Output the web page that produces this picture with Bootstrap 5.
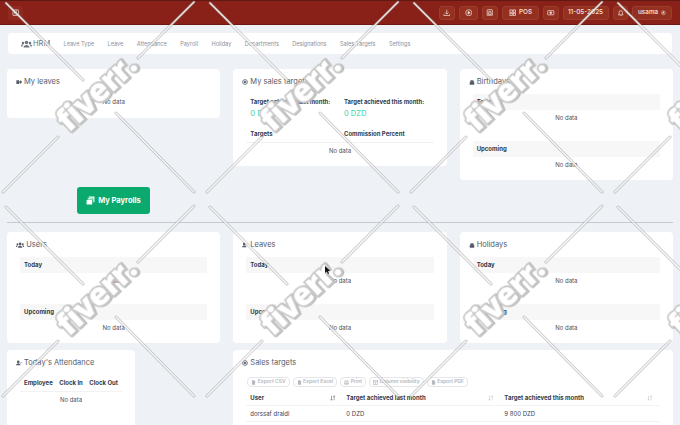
<!DOCTYPE html>
<html lang="en">
<head>
<meta charset="utf-8">
<title>HRM</title>
<link href="https://cdn.jsdelivr.net/npm/bootstrap@5.3.0/dist/css/bootstrap.min.css" rel="stylesheet">
<style>
html,body{height:425px;overflow:hidden}
body{background:#eef1f6;font-family:Inter,"Liberation Sans",sans-serif;font-size:6px;color:#3d4452;position:relative}
.topbar{height:25px;background:#8a2118;border-bottom:1px solid #6e1810;border-top:1px solid #5f1a14;padding:0 8px}
.tbtn{height:14px;padding:0 3px;background:#93301f;border:1px solid #9c3d2f;border-radius:3px;color:#f0dcd8;font-size:6.3px;font-weight:600;display:flex;align-items:center;justify-content:center;gap:3px}
.tbtn svg{width:7.5px;height:7.5px;display:block}
.tw2{padding:0 5px}.twpos{padding:0 6px}.twdate{padding:0 4px;width:46px}.twuser{padding:0 5px;width:40px}
.menuicon{background:#8f2a20;padding:0;width:15px;border:0;margin-left:0}
.actions{gap:4px}
.navcard{margin:8px 8px 15px;height:21px;background:#fff;border-radius:4px;padding:1px 13px 0;gap:13.4px;color:#8b919c;font-size:5.6px}
.navcard .hrm{font-size:7.5px;color:#6c7380;display:flex;align-items:center;gap:1px}
.page{padding:0 7px}
.page>.row{--bs-gutter-x:13px;--bs-gutter-y:0}
.pane{background:#fff;border-radius:4px;padding:8px 13px 0 13px;font-size:6px;overflow:hidden}
.pane h6{font-size:7.5px;font-weight:400;color:#555c69;margin:0;line-height:10px;display:flex;align-items:center;gap:2px;margin-left:-4px}
.pane h6 svg{height:6px;width:auto;flex:none}
.pane-leaves{height:49px}
.pane-sales{height:97px}
.pane-birth{height:111px}
.pane-two{height:111px}
.pane-att{width:128px;height:90px}
.pane-tgt{height:90px}
.nodata{text-align:center;color:#4a505c;line-height:16px}
.nodata-top{margin-top:7px}
.strip{background:#f7f7f8;height:16px;line-height:16px;padding:0 4px;font-weight:700;color:#333a47}
.strip-first{margin-top:7px}
.strip-up{margin-top:15px}
.gridtwo{display:grid;grid-template-columns:1fr 1fr}
.gridtwo>div{padding:0 4px}
.achrow{margin-top:10px}
.ach{color:#333a47;font-weight:700;line-height:9px;white-space:nowrap;font-size:5.900px}
.zero{color:#41d3a5;font-size:7.5px;line-height:12px;margin-top:2px}
.th{font-weight:700;color:#333a47;border-bottom:1px solid #f1f2f4;height:16px;line-height:14px}
.thgap{margin-top:7px}
.paybtn{width:73px;height:27px;background:#0aa96d;border-radius:3px;color:#fff;font-size:7.5px;font-weight:700;gap:3px}
.payrow{margin-top:69px;padding-left:70px}
.divline{border:0;border-top:1px solid #c6cad0;opacity:1;margin:8px 0 9px}
.expbar{margin:9px 0 3px 1px;gap:3px}
.exp{height:10px;border:1px solid #e4e6ea;border-radius:4px;padding:0 3px;color:#b4b8c0;font-size:5px;font-weight:600;display:flex;align-items:center;gap:1.500px;white-space:nowrap}
.exp svg{width:5px;height:5px}
.tgrid{display:grid;grid-template-columns:96px 158px 159px}
.tcell{padding:0 4px;display:flex;justify-content:space-between;align-items:center}
.tcell svg{width:6px;height:6px;margin-right:2px}
.tdata{padding:0 4px;line-height:15px;border-bottom:1px solid #f1f2f4}
.attrow{margin-top:8px;padding:0 4px;gap:0}
.atthead{display:flex;justify-content:space-between}
.rowlast{margin-top:7px}
.wm{position:absolute;left:0;top:0;width:680px;height:425px;pointer-events:none}
.wmtext{font-family:"Open Sans","Liberation Sans",sans-serif;font-weight:800;font-size:31px;letter-spacing:-.5px;fill:#fff;stroke:#c9c9c9;stroke-width:3.5px;paint-order:stroke;filter:drop-shadow(1px 1.500px 0 #b4b4b4)}
</style>
</head>
<body>
<header class="topbar d-flex align-items-center justify-content-between">
  <div class="tbtn menuicon"><svg viewBox="0 0 16 16" fill="none" stroke="#f3dcd8" stroke-width="1.6"><rect x="2" y="2" width="12" height="12" rx="1"/><path d="M9 2v12M4.500 6h2M4.500 8h2M4.500 10h2"/></svg></div>
  <div class="d-flex align-items-center actions">
    <div class="tbtn"><svg viewBox="0 0 16 16" fill="none" stroke="currentColor" stroke-width="1.6"><path d="M8 1.500v9M4.500 7.500 8 11l3.500-3.500M2 11v3h12v-3"/></svg></div>
    <div class="tbtn tw2"><svg viewBox="0 0 16 16" fill="none" stroke="currentColor" stroke-width="1.6"><circle cx="8" cy="8" r="6.500"/><path d="M6.500 5 11 8l-4.500 3z" fill="currentColor"/></svg></div>
    <div class="tbtn"><svg viewBox="0 0 16 16" fill="none" stroke="currentColor" stroke-width="1.6"><rect x="2.500" y="1.500" width="11" height="13" rx="1"/><path d="M5 5h6M5 8h6v4H5z"/></svg></div>
    <div class="tbtn twpos"><svg viewBox="0 0 16 16" fill="none" stroke="currentColor" stroke-width="1.6"><rect x="2" y="2" width="5" height="5"/><rect x="9" y="2" width="5" height="5"/><rect x="2" y="9" width="5" height="5"/><rect x="9" y="9" width="5" height="5"/></svg>POS</div>
    <div class="tbtn"><svg viewBox="0 0 16 16" fill="none" stroke="currentColor" stroke-width="1.6"><rect x="1.500" y="3.500" width="13" height="9" rx="1"/><circle cx="8" cy="8" r="2" fill="currentColor"/></svg></div>
    <div class="tbtn twdate">11-05-2025</div>
    <div class="tbtn"><svg viewBox="0 0 16 16" fill="none" stroke="currentColor" stroke-width="1.6"><path d="M3 12.500h10l-1.500-2V7a3.500 3.500 0 0 0-7 0v3.500zM6.500 14.500h3"/></svg></div>
    <div class="tbtn twuser">usama<svg viewBox="0 0 16 16" fill="none" stroke="currentColor" stroke-width="1.600"><circle cx="8" cy="8" r="6.500"/><circle cx="8" cy="6.500" r="2.200" fill="currentColor"/><path d="M4 12.500c1-2.500 7-2.500 8 0"/></svg></div>
  </div>
</header>
<nav class="navcard d-flex align-items-center">
  <span class="hrm"><svg width="11" height="8" viewBox="0 0 22 16" fill="#6c7380"><circle cx="11" cy="5" r="3.500"/><circle cx="4" cy="6" r="2.500"/><circle cx="18" cy="6" r="2.500"/><path d="M5 15c0-7 12-7 12 0zM0 13c0-4 3-5 5-4-1 1-2 2-2 4zM22 13c0-4-3-5-5-4 1 1 2 2 2 4z"/></svg>HRM</span>
  <span>Leave Type</span><span>Leave</span><span>Attendance</span><span>Payroll</span><span>Holiday</span><span>Departments</span><span>Designations</span><span>Sales Targets</span><span>Settings</span>
</nav>
<main class="page">
  <div class="row">
    <div class="col-4">
      <section class="pane pane-leaves">
        <h6><svg viewBox="0 0 16 16" fill="#555c69"><path d="M1 3h7v10H1zM9 5h3V2l4 6-4 6v-3H9z"/></svg>My leaves</h6>
        <div class="nodata nodata-top">No data</div>
      </section>
      <div class="payrow"><div class="paybtn d-flex align-items-center justify-content-center"><svg width="9" height="9" viewBox="0 0 16 16" fill="#fff"><path d="M5 1h10v10H13V3H5zM3 4h9v2H3zM1 7h10v8H1z"/></svg>My Payrolls</div></div>
    </div>
    <div class="col-4">
      <section class="pane pane-sales">
        <h6><svg viewBox="0 0 16 16" fill="none" stroke="#555c69" stroke-width="2"><circle cx="8" cy="8" r="6.500"/><circle cx="8" cy="8" r="2.500" fill="#555c69"/></svg>My sales targets</h6>
        <div class="gridtwo achrow">
          <div><div class="ach">Target achieved last month:</div><div class="zero">0 DZD</div></div>
          <div><div class="ach">Target achieved this month:</div><div class="zero">0 DZD</div></div>
        </div>
        <div class="gridtwo th thgap"><div>Targets</div><div>Commission Percent</div></div>
        <div class="nodata">No data</div>
      </section>
    </div>
    <div class="col-4">
      <section class="pane pane-birth">
        <h6><svg viewBox="0 0 16 16" fill="#555c69"><path d="M2 7h12v8H2zM4 3h8v4H4z"/></svg>Birthdays</h6>
        <div class="strip strip-first">Today</div>
        <div class="nodata">No data</div>
        <div class="strip strip-up">Upcoming</div>
        <div class="nodata">No data</div>
      </section>
    </div>
  </div>
  <hr class="divline">
  <div class="row">
    <div class="col-4">
      <section class="pane pane-two">
        <h6><svg viewBox="0 0 22 16" fill="#555c69"><circle cx="11" cy="5" r="3.500"/><circle cx="4" cy="6" r="2.500"/><circle cx="18" cy="6" r="2.500"/><path d="M5 15c0-7 12-7 12 0zM0 13c0-4 3-5 5-4-1 1-2 2-2 4zM22 13c0-4-3-5-5-4 1 1 2 2 2 4z"/></svg>Users</h6>
        <div class="strip strip-first">Today</div>
        <div class="nodata">No data</div>
        <div class="strip strip-up">Upcoming</div>
        <div class="nodata">No data</div>
      </section>
    </div>
    <div class="col-4">
      <section class="pane pane-two">
        <h6><svg viewBox="0 0 16 16" fill="#555c69"><circle cx="6" cy="5" r="3.500"/><path d="M0 14c0-6 12-6 12 0zM11 6h3V4l2 3-2 3V8h-3z"/></svg>Leaves</h6>
        <div class="strip strip-first">Today</div>
        <div class="nodata">No data</div>
        <div class="strip strip-up">Upcoming</div>
        <div class="nodata">No data</div>
      </section>
    </div>
    <div class="col-4">
      <section class="pane pane-two">
        <h6><svg viewBox="0 0 16 16" fill="#555c69"><path d="M2 7h12v8H2zM4 3h8v4H4z"/></svg>Holidays</h6>
        <div class="strip strip-first">Today</div>
        <div class="nodata">No data</div>
        <div class="strip strip-up">Upcoming</div>
        <div class="nodata">No data</div>
      </section>
    </div>
  </div>
  <div class="row rowlast">
    <div class="col-4">
      <section class="pane pane-att">
        <h6><svg viewBox="0 0 16 16" fill="#555c69"><circle cx="6" cy="5" r="3.500"/><path d="M0 14c0-6 12-6 12 0zM11 8l2 2 3-4-1-1-2 3-1-1z"/></svg>Today's Attendance</h6>
        <div class="atthead th attrow"><span>Employee</span><span>Clock In</span><span>Clock Out</span></div>
        <div class="nodata">No data</div>
      </section>
    </div>
    <div class="col-8">
      <section class="pane pane-tgt">
        <h6><svg viewBox="0 0 16 16" fill="none" stroke="#555c69" stroke-width="2"><circle cx="8" cy="8" r="6.500"/><circle cx="8" cy="8" r="2.500" fill="#555c69"/></svg>Sales targets</h6>
        <div class="d-flex expbar">
          <span class="exp"><svg viewBox="0 0 16 16" fill="currentColor"><path d="M3 1h7l3 3v11H3z"/></svg>Export CSV</span>
          <span class="exp"><svg viewBox="0 0 16 16" fill="currentColor"><path d="M3 1h7l3 3v11H3z"/></svg>Export Excel</span>
          <span class="exp"><svg viewBox="0 0 16 16" fill="none" stroke="currentColor" stroke-width="2"><path d="M4 6V1h8v5M1 6h14v6H1zM4 10h8v5H4z"/></svg>Print</span>
          <span class="exp"><svg viewBox="0 0 16 16" fill="none" stroke="currentColor" stroke-width="2"><rect x="1" y="2" width="14" height="12"/><path d="M1 6h14M8 6v8"/></svg>Column visibility</span>
          <span class="exp"><svg viewBox="0 0 16 16" fill="currentColor"><path d="M3 1h7l3 3v11H3z"/></svg>Export PDF</span>
        </div>
        <div class="tgrid">
          <div class="th tcell">User<svg viewBox="0 0 16 16" fill="none" stroke="#666c78" stroke-width="1.500"><path d="M4 2v12M2 11l2 3 2-3M11 14V2M9 5l2-3 2 3"/></svg></div>
          <div class="th tcell">Target achieved last month<svg viewBox="0 0 16 16" fill="none" stroke="#c2c6cc" stroke-width="1.500"><path d="M4 2v12M2 11l2 3 2-3M11 14V2M9 5l2-3 2 3"/></svg></div>
          <div class="th tcell">Target achieved this month<svg viewBox="0 0 16 16" fill="none" stroke="#c2c6cc" stroke-width="1.500"><path d="M4 2v12M2 11l2 3 2-3M11 14V2M9 5l2-3 2 3"/></svg></div>
          <div class="tdata">dorssaf draidi</div><div class="tdata">0 DZD</div><div class="tdata">9 800 DZD</div>
        </div>
      </section>
    </div>
  </div>
</main>
<svg class="wm" viewBox="0 0 680 425" aria-hidden="true">
  <defs>
    <g id="wmline"><path d="M6 3 83 80M116 113 194 192M3 192 58 137M138 58 194 2" fill="none" stroke-linecap="round" stroke="#8a8a8a" stroke-opacity=".5" stroke-width="3"/><path d="M6 3 83 80M116 113 194 192M3 192 58 137M138 58 194 2" fill="none" stroke-linecap="round" stroke="#fff" stroke-opacity=".85" stroke-width="1.600"/></g>
    <text id="wmtx" class="wmtext" transform="translate(69 133) rotate(-43)">fiverr.</text>
  </defs>
  <use href="#wmline"/><use href="#wmline" x="204"/><use href="#wmline" x="408"/><use href="#wmline" x="612"/>
  <use href="#wmline" y="204"/><use href="#wmline" x="204" y="204"/><use href="#wmline" x="408" y="204"/><use href="#wmline" x="612" y="204"/>
  <use href="#wmtx"/><use href="#wmtx" x="204"/><use href="#wmtx" x="408"/><use href="#wmtx" x="612"/>
  <use href="#wmtx" y="204"/><use href="#wmtx" x="204" y="204"/><use href="#wmtx" x="408" y="204"/><use href="#wmtx" x="612" y="204"/>
  <path d="M325 266v7l1.800-1.600 1.200 2.600 1-.5-1.200-2.500 2.400-.2z" fill="#111"/>
</svg>
<script src="https://cdn.jsdelivr.net/npm/bootstrap@5.3.0/dist/js/bootstrap.bundle.min.js"></script>
</body>
</html>
